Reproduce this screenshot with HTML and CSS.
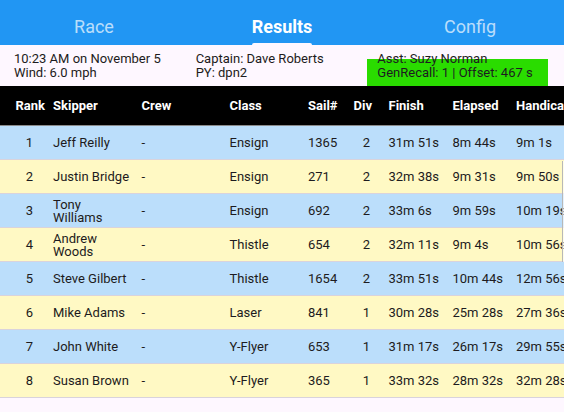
FILE: index.html
```html
<!DOCTYPE html>
<html>
<head>
<meta charset="utf-8">
<link rel="stylesheet" href="styles.css">
</head>
<body>
<div class="app">
  <nav class="tabs">
    <div class="tab"><span class="tab-label">Race</span></div>
    <div class="tab active"><span class="tab-label">Results</span><span class="indicator"></span></div>
    <div class="tab"><span class="tab-label">Config</span></div>
  </nav>
  <section class="info">
    <div class="info-col">
      <div class="line">10:23 AM on November 5</div>
      <div class="line">Wind: 6.0 mph</div>
    </div>
    <div class="info-col">
      <div class="line">Captain: Dave Roberts</div>
      <div class="line">PY: dpn2</div>
    </div>
    <div class="info-col">
      <div class="line">Asst: Suzy Norman</div>
      <div class="line recall">GenRecall: 1 | Offset: 467 s</div>
    </div>
  </section>
  <section class="table-wrap">
    <div class="table">
      <div class="row head">
        <div class="c rank">Rank</div>
        <div class="c">Skipper</div>
        <div class="c">Crew</div>
        <div class="c">Class</div>
        <div class="c">Sail#</div>
        <div class="c div">Div</div>
        <div class="c">Finish</div>
        <div class="c">Elapsed</div>
        <div class="c">Handicap</div>
      </div>
      <div class="row blue">
        <div class="c rank">1</div><div class="c skip">Jeff Reilly</div><div class="c">-</div><div class="c">Ensign</div><div class="c">1365</div><div class="c div">2</div><div class="c">31m 51s</div><div class="c">8m 44s</div><div class="c">9m 1s</div>
      </div>
      <div class="row yellow">
        <div class="c rank">2</div><div class="c skip">Justin Bridge</div><div class="c">-</div><div class="c">Ensign</div><div class="c">271</div><div class="c div">2</div><div class="c">32m 38s</div><div class="c">9m 31s</div><div class="c">9m 50s</div>
      </div>
      <div class="row blue">
        <div class="c rank">3</div><div class="c skip">Tony Williams</div><div class="c">-</div><div class="c">Ensign</div><div class="c">692</div><div class="c div">2</div><div class="c">33m 6s</div><div class="c">9m 59s</div><div class="c">10m 19s</div>
      </div>
      <div class="row yellow">
        <div class="c rank">4</div><div class="c skip">Andrew Woods</div><div class="c">-</div><div class="c">Thistle</div><div class="c">654</div><div class="c div">2</div><div class="c">32m 11s</div><div class="c">9m 4s</div><div class="c">10m 56s</div>
      </div>
      <div class="row blue">
        <div class="c rank">5</div><div class="c skip">Steve Gilbert</div><div class="c">-</div><div class="c">Thistle</div><div class="c">1654</div><div class="c div">2</div><div class="c">33m 51s</div><div class="c">10m 44s</div><div class="c">12m 56s</div>
      </div>
      <div class="row yellow">
        <div class="c rank">6</div><div class="c skip">Mike Adams</div><div class="c">-</div><div class="c">Laser</div><div class="c">841</div><div class="c div">1</div><div class="c">30m 28s</div><div class="c">25m 28s</div><div class="c">27m 36s</div>
      </div>
      <div class="row blue">
        <div class="c rank">7</div><div class="c skip">John White</div><div class="c">-</div><div class="c">Y-Flyer</div><div class="c">653</div><div class="c div">1</div><div class="c">31m 17s</div><div class="c">26m 17s</div><div class="c">29m 55s</div>
      </div>
      <div class="row yellow">
        <div class="c rank">8</div><div class="c skip">Susan Brown</div><div class="c">-</div><div class="c">Y-Flyer</div><div class="c">365</div><div class="c div">1</div><div class="c">33m 32s</div><div class="c">28m 32s</div><div class="c">32m 28s</div>
      </div>
    </div>
    <div class="scrollbar"></div>
  </section>
</div>
</body>
</html>
```

FILE: styles.css
```css
* { box-sizing: border-box; }
html, body { margin: 0; padding: 0; }
body {
  width: 564px;
  height: 412px;
  overflow: hidden;
  background: #fef7ff;
  font-family: Roboto, "Noto Sans", sans-serif;
  color: #1d1b20;
}
.app { display: flex; flex-direction: column; }

.tabs {
  display: grid;
  grid-template-columns: 1fr 1fr 1fr;
  height: 45px;
  background: #2196f3;
}
.tab {
  display: flex;
  flex-direction: column;
  align-items: center;
  justify-content: space-between;
  padding-top: 15.5px;
  font-size: 18px;
  line-height: 21px;
  color: rgba(255, 255, 255, 0.7);
}
.tab.active { color: #ffffff; font-weight: 700; }
.indicator {
  width: 60px;
  height: 2px;
  background: #fef7ff;
  border-radius: 2px 2px 0 0;
}

.info {
  display: grid;
  grid-template-columns: 1fr 1fr 1fr;
  height: 41px;
  padding: 6.5px 5px 0 14px;
  font-size: 13px;
  line-height: 14.4px;
}
.info-col { display: block; }
.recall {
  height: 27px;
  background: #2adc00;
  margin: -7px 11px 0 -10.3px;
  padding: 7px 0 0 10.3px;
}

.table-wrap { position: relative; overflow: hidden; width: 564px; }
.table { width: 620px; font-size: 13px; line-height: 13px; }
.row {
  display: grid;
  grid-template-columns: 53px 88.5px 88px 78.5px 44.5px 36px 64px 63.5px 104px;
  align-items: center;
  height: 34px;
  border-bottom: 1px solid #d9d3dc;
}
.row.head {
  height: 40px;
  background: #000000;
  color: #ffffff;
  font-weight: 700;
  border-bottom: 1px solid #8a8a8a;
}
.row.blue { background: #bbdefb; }
.row.yellow { background: #fff9c4; }
.c { white-space: nowrap; }
.c.skip { white-space: normal; padding-right: 8.5px; }
.c.rank { padding-left: 15.5px; padding-right: 9.5px; text-align: center; }
.head .c.rank { text-align: left; padding-right: 0; }
.c.div { padding-right: 8px; text-align: center; }
.head .c.div { text-align: left; padding-left: 1px; padding-right: 0; }

.scrollbar {
  position: absolute;
  right: 0;
  top: 75px;
  width: 2px;
  height: 101px;
  border-left: 1px solid #b8b8b8;
  background: rgba(255, 255, 255, 0.6);
}
```
